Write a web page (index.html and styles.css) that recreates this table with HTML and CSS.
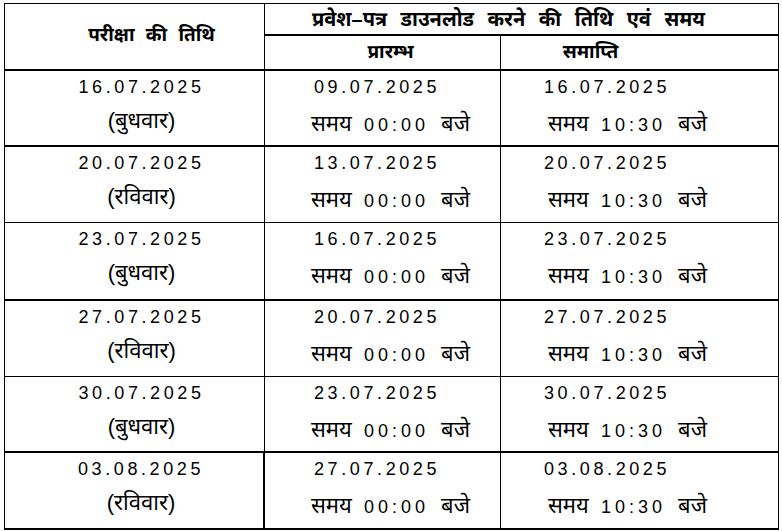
FILE: index.html
```html
<!DOCTYPE html>
<html lang="hi">
<head>
<meta charset="utf-8">
<title>प्रवेश-पत्र डाउनलोड</title>
<link rel="stylesheet" href="styles.css">
</head>
<body>
<table class="sched">
  <colgroup>
    <col class="c1"><col class="c2"><col class="c3">
  </colgroup>
  <thead>
    <tr class="h1">
      <th rowspan="2" class="hdate">परीक्षा की तिथि</th>
      <th colspan="2" class="hmain">प्रवेश–पत्र डाउनलोड करने की तिथि एवं समय</th>
    </tr>
    <tr class="h2">
      <th class="hstart">प्रारम्भ</th>
      <th class="hend">समाप्ति</th>
    </tr>
  </thead>
  <tbody>
    <tr class="r thick">
      <td class="d1"><div class="date">16.07.2025</div><div class="day">(बुधवार)</div></td>
      <td class="d2"><div class="date">09.07.2025</div><div class="time">समय <span class="num">00:00</span> बजे</div></td>
      <td class="d3"><div class="date">16.07.2025</div><div class="time">समय <span class="num">10:30</span> बजे</div></td>
    </tr>
    <tr class="r thin">
      <td class="d1"><div class="date">20.07.2025</div><div class="day">(रविवार)</div></td>
      <td class="d2"><div class="date">13.07.2025</div><div class="time">समय <span class="num">00:00</span> बजे</div></td>
      <td class="d3"><div class="date">20.07.2025</div><div class="time">समय <span class="num">10:30</span> बजे</div></td>
    </tr>
    <tr class="r thick tall">
      <td class="d1"><div class="date">23.07.2025</div><div class="day">(बुधवार)</div></td>
      <td class="d2"><div class="date">16.07.2025</div><div class="time">समय <span class="num">00:00</span> बजे</div></td>
      <td class="d3"><div class="date">23.07.2025</div><div class="time">समय <span class="num">10:30</span> बजे</div></td>
    </tr>
    <tr class="r thin">
      <td class="d1"><div class="date">27.07.2025</div><div class="day">(रविवार)</div></td>
      <td class="d2"><div class="date">20.07.2025</div><div class="time">समय <span class="num">00:00</span> बजे</div></td>
      <td class="d3"><div class="date">27.07.2025</div><div class="time">समय <span class="num">10:30</span> बजे</div></td>
    </tr>
    <tr class="r thick">
      <td class="d1"><div class="date">30.07.2025</div><div class="day">(बुधवार)</div></td>
      <td class="d2"><div class="date">23.07.2025</div><div class="time">समय <span class="num">00:00</span> बजे</div></td>
      <td class="d3"><div class="date">30.07.2025</div><div class="time">समय <span class="num">10:30</span> बजे</div></td>
    </tr>
    <tr class="r thick last">
      <td class="d1"><div class="date">03.08.2025</div><div class="day">(रविवार)</div></td>
      <td class="d2"><div class="date">27.07.2025</div><div class="time">समय <span class="num">00:00</span> बजे</div></td>
      <td class="d3"><div class="date">03.08.2025</div><div class="time">समय <span class="num">10:30</span> बजे</div></td>
    </tr>
  </tbody>
</table>
</body>
</html>
```
FILE: styles.css
```css
html, body {
  margin: 0;
  padding: 0;
  background: #ffffff;
}
body {
  padding: 3px 0 0 4px;
  font-family: "Liberation Sans", "Noto Sans Devanagari", "Noto Sans", sans-serif;
  color: #000;
}
.sched {
  border-collapse: separate;
  border-spacing: 0;
  table-layout: fixed;
  width: 774px;
  border-top: 1px solid #000;
  border-left: 1px solid #000;
}
.c1 { width: 260px; }
.c2 { width: 236px; }
.c3 { width: 278px; }

.sched th, .sched td {
  padding: 0;
  border-right: 1px solid #000;
  vertical-align: top;
  box-sizing: border-box;
}
.sched th {
  font-weight: bold;
  font-size: 20px;
  word-spacing: 8px;
}
.h1 { height: 32px; }
.h2 { height: 35px; }
.hdate {
  border-bottom: 2px solid #000;
  vertical-align: middle !important;
  padding-left: 34px !important;
  text-align: center;
  font-size: 19px !important;
  word-spacing: 6px !important;
}
.hmain {
  border-bottom: 2px solid #000;
  text-align: center;
  padding-right: 26px !important;
  line-height: 30px;
}
.hstart, .hend {
  border-bottom: 2px solid #000;
  line-height: 32px;
  text-align: center;
  font-size: 19px !important;
}
.hstart { padding-left: 16px !important; }
.hend { padding-right: 98px !important; }

.r { height: 76px; }
.r.tall { height: 78px; }
.r.last { height: 77px; }
.r.thick td { border-bottom: 2px solid #000; }
.r.thin td { border-bottom: 1px solid #000; }
.r.last td.d1 {
  border-right-width: 2px;
  box-shadow: -1px 0 0 #000;
}

.date {
  font-size: 18px;
  letter-spacing: 3.6px;
  line-height: 26px;
  padding-top: 3px;
}
.day {
  font-size: 22px;
  line-height: 30px;
  margin-top: 6px;
}
.time {
  font-size: 22px;
  line-height: 30px;
  margin-top: 9px;
  word-spacing: 6px;
}
.time .num {
  font-size: 18px;
  letter-spacing: 4px;
}
.d1 { text-align: center; padding-left: 14px !important; }
.d2 { padding-left: 49px !important; }
.d2 .time { margin-left: -3px; }
.d3 { padding-left: 43px !important; }
.d3 .time { margin-left: 4px; }
```
